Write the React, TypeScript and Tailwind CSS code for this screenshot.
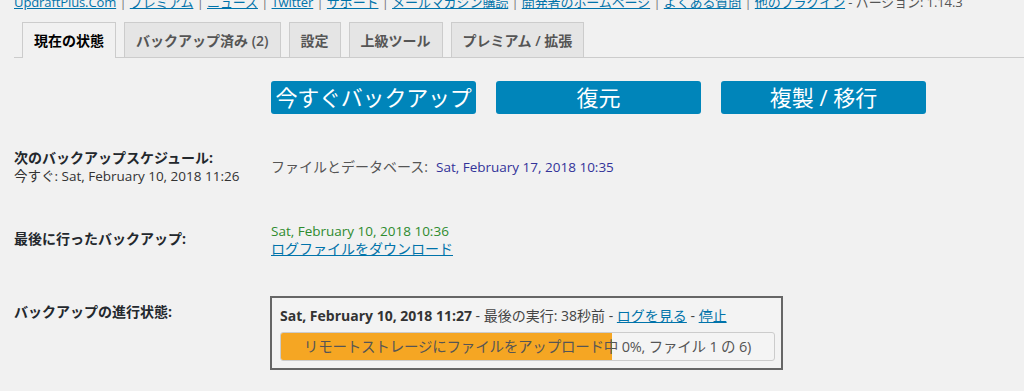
import React from 'react';

const font = { fontFamily: '"Open Sans", "Noto Sans CJK JP", sans-serif' };

const links = [
  'UpdraftPlus.Com',
  'プレミアム',
  'ニュース',
  'Twitter',
  'サポート',
  'メールマガジン購読',
  '開発者のホームページ',
  'よくある質問',
  '他のプラグイン',
];

const tabs = ['現在の状態', 'バックアップ済み (2)', '設定', '上級ツール', 'プレミアム / 拡張'];

export default function App() {
  return (
    <div className="w-[1024px] h-[391px] overflow-hidden bg-[#f1f1f1] text-[#23282d]" style={font}>
      {/* Plugin links line (partly cut off at top) */}
      <div className="mt-[-7px] pl-[14px] text-[13px] leading-[18px] text-[#555] whitespace-nowrap tracking-[-0.1px]">
        {links.map((l, i) => (
          <React.Fragment key={l}>
            {i > 0 && <span className="text-[#777]"> | </span>}
            <a className="text-[#0073aa] underline">{l}</a>
          </React.Fragment>
        ))}
        <span> - バージョン: 1.14.3</span>
      </div>

      {/* Tabs */}
      <div className="mt-[11px] ml-[14px] pl-[8px] flex gap-[8px] border-b border-[#ccc] h-[36px] items-end">
        {tabs.map((t, i) => (
          <div
            key={t}
            className={
              i === 0
                ? 'h-[36px] px-[11px] flex items-center border border-[#ccc] border-b-0 bg-[#f1f1f1] text-[14px] font-semibold text-[#000] mb-[-1px]'
                : 'h-[35px] px-[11px] flex items-center border border-[#ccc] border-b-0 bg-[#e5e5e5] text-[14px] font-semibold text-[#555]'
            }
          >
            {t}
          </div>
        ))}
      </div>

      {/* Action buttons */}
      <div className="mt-[23px] ml-[271px] flex gap-[20px]">
        <div className="w-[205px] h-[33px] rounded-[3px] bg-[#0085ba] text-white text-[22px] flex items-center justify-center whitespace-nowrap tracking-[-0.2px]">
          今すぐバックアップ
        </div>
        <div className="w-[205px] h-[33px] rounded-[3px] bg-[#0085ba] text-white text-[22px] flex items-center justify-center">
          復元
        </div>
        <div className="w-[205px] h-[33px] rounded-[3px] bg-[#0085ba] text-white text-[22px] flex items-center justify-center">
          複製 / 移行
        </div>
      </div>

      {/* Status table */}
      <div className="ml-[14px] mt-[35px] flex flex-col">
        <div className="flex h-[38px]">
          <div className="w-[257px] text-[13.5px] leading-[18px]">
            <div className="font-bold text-[14px]">次のバックアップスケジュール:</div>
            <div className="text-[#333]">今すぐ: Sat, February 10, 2018 11:26</div>
          </div>
          <div className="pt-[9px] text-[14px] leading-[18px] text-[#555]">
            ファイルとデータベース:
            <span className="ml-[8px] text-[13.5px] text-[#333399]">Sat, February 17, 2018 10:35</span>
          </div>
        </div>

        <div className="flex mt-[35px] h-[38px]">
          <div className="w-[257px] pt-[8px] font-bold text-[14px] leading-[18px]">
            最後に行ったバックアップ:
          </div>
          <div className="text-[13.5px] leading-[18px]">
            <div className="text-[#2e8b2e]">Sat, February 10, 2018 10:36</div>
            <a className="text-[#0073aa] underline text-[14px]">ログファイルをダウンロード</a>
          </div>
        </div>

        <div className="flex mt-[36px]">
          <div className="w-[256px] pt-[7px] font-bold text-[14px] leading-[18px]">
            バックアップの進行状態:
          </div>
          <div className="w-[513px] h-[74px] border-2 border-[#666] bg-[#f3f3f3] px-[8px] pt-[8px]">
            <div className="text-[14px] leading-[20px] text-[#444] whitespace-nowrap">
              <span className="font-bold text-[#333]">Sat, February 10, 2018 11:27</span> - 最後の実行: 38秒前 -{' '}
              <a className="text-[#0073aa] underline">ログを見る</a> - <a className="text-[#0073aa] underline">停止</a>
            </div>
            <div className="relative mt-[6px] w-[495px] h-[29px] rounded-[3px] border border-[#ccc] bg-[#f4f4f4] overflow-hidden">
              <div className="absolute left-0 top-0 bottom-0 w-[331px] bg-[#f5a623]" />
              <div className="absolute inset-0 flex items-center justify-center text-[14.5px] text-[#555] whitespace-nowrap tracking-[-0.2px]">
                リモートストレージにファイルをアップロード中 0%, ファイル 1 の 6)
              </div>
            </div>
          </div>
        </div>
      </div>
    </div>
  );
}
